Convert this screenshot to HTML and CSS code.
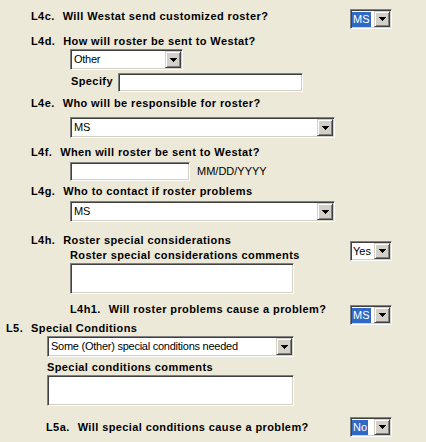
FILE: index.html
```html
<!DOCTYPE html>
<html lang="en">
<head>
    <meta charset="UTF-8">
    <title>Roster</title>
    <link rel="stylesheet" href="styles.css">
</head>
<body>
<div class="form">

    <div class="row l4c">
        <div class="lbl"><span class="num">L4c.</span>Will Westat send customized roster?</div>
        <div class="combo small"><div class="val"><span class="sel">MS</span></div><div class="btn"><svg width="7" height="4" viewBox="0 0 7 4"><path d="M0 0h7v1h-1v1h-1v1h-1v1h-1v-1h-1v-1h-1v-1h-1z"/></svg></div></div>
    </div>

    <div class="lbl l4d"><span class="num">L4d.</span>How will roster be sent to Westat?</div>
    <div class="combo other"><div class="val">Other</div><div class="btn"><svg width="7" height="4" viewBox="0 0 7 4"><path d="M0 0h7v1h-1v1h-1v1h-1v1h-1v-1h-1v-1h-1v-1h-1z"/></svg></div></div>
    <div class="line specify">
        <span class="lbl">Specify</span>
        <input type="text" class="text">
    </div>

    <div class="lbl l4e"><span class="num">L4e.</span>Who will be responsible for roster?</div>
    <div class="combo wide ms1"><div class="val">MS</div><div class="btn"><svg width="7" height="4" viewBox="0 0 7 4"><path d="M0 0h7v1h-1v1h-1v1h-1v1h-1v-1h-1v-1h-1v-1h-1z"/></svg></div></div>

    <div class="lbl l4f"><span class="num">L4f.</span>When will roster be sent to Westat?</div>
    <div class="line date">
        <input type="text" class="text">
        <span class="hint">MM/DD/YYYY</span>
    </div>

    <div class="lbl l4g"><span class="num">L4g.</span>Who to contact if roster problems</div>
    <div class="combo wide ms2"><div class="val">MS</div><div class="btn"><svg width="7" height="4" viewBox="0 0 7 4"><path d="M0 0h7v1h-1v1h-1v1h-1v1h-1v-1h-1v-1h-1v-1h-1z"/></svg></div></div>

    <div class="row l4h">
        <div>
            <div class="lbl"><span class="num">L4h.</span>Roster special considerations</div>
            <div class="sub">
                <div class="lbl comm">Roster special considerations comments</div>
                <textarea class="text area1"></textarea>
            </div>
        </div>
        <div class="combo small yes"><div class="val">Yes</div><div class="btn"><svg width="7" height="4" viewBox="0 0 7 4"><path d="M0 0h7v1h-1v1h-1v1h-1v1h-1v-1h-1v-1h-1v-1h-1z"/></svg></div></div>
    </div>

    <div class="row l4h1">
        <div class="lbl"><span class="num">L4h1.</span>Will roster problems cause a problem?</div>
        <div class="combo small drop2"><div class="val"><span class="sel">MS</span></div><div class="btn"><svg width="7" height="4" viewBox="0 0 7 4"><path d="M0 0h7v1h-1v1h-1v1h-1v1h-1v-1h-1v-1h-1v-1h-1z"/></svg></div></div>
    </div>

    <div class="lbl l5"><span class="num">L5.</span>Special Conditions</div>
    <div class="combo some"><div class="val">Some (Other) special conditions needed</div><div class="btn"><svg width="7" height="4" viewBox="0 0 7 4"><path d="M0 0h7v1h-1v1h-1v1h-1v1h-1v-1h-1v-1h-1v-1h-1z"/></svg></div></div>
    <div class="lbl comm5">Special conditions comments</div>
    <textarea class="text area2"></textarea>

    <div class="row l5a">
        <div class="lbl"><span class="num">L5a.</span>Will special conditions cause a problem?</div>
        <div class="combo small"><div class="val"><span class="sel">No</span></div><div class="btn"><svg width="7" height="4" viewBox="0 0 7 4"><path d="M0 0h7v1h-1v1h-1v1h-1v1h-1v-1h-1v-1h-1v-1h-1z"/></svg></div></div>
    </div>

</div>
</body>
</html>
```

FILE: styles.css
```css
body{
    margin:0;
    background:#ECE9D8;
    font:bold 11px/13px "Liberation Sans", Arial, sans-serif;
    letter-spacing:.4px;
    color:#000;
}
.form{
    width:392px;
    padding-top:9px;
}
.row{
    display:flex;
    justify-content:space-between;
    align-items:flex-start;
}
.line{
    display:flex;
    align-items:center;
}
.lbl{
    white-space:nowrap;
}
.num{
    margin-right:8px;
}

/* combo boxes */
.combo{
    display:flex;
    box-sizing:border-box;
    height:21px;
    padding:1px;
    background:#fff;
    border:1px solid;
    border-color:#808080 #fff #fff #808080;
    box-shadow:inset 1px 1px #404040, inset -1px -1px #D4D0C8;
    font-weight:normal;
    letter-spacing:-.25px;
}
.combo .val{
    flex:1;
    display:flex;
    align-items:center;
    padding-left:2px;
    white-space:nowrap;
    overflow:hidden;
}
.combo .btn{
    width:16px;
    box-sizing:border-box;
    background:#D4D0C8;
    border:1px solid;
    border-color:#D4D0C8 #404040 #404040 #D4D0C8;
    box-shadow:inset 1px 1px #fff, inset -1px -1px #808080;
    display:flex;
    align-items:center;
    justify-content:center;
}
.combo svg{
    display:block;
    shape-rendering:crispEdges;
}
.small{
    width:42px;
    height:20px;
    letter-spacing:0;
}
.small .val{
    padding-left:1px;
}
.sel{
    background:#316AC5;
    color:#fff;
    margin-left:-1px;
    padding:0 1px;
    line-height:15px;
}

/* text boxes */
.text{
    display:block;
    box-sizing:border-box;
    height:19px;
    margin:0;
    padding:1px;
    background:#fff;
    border:1px solid;
    border-color:#808080 #fff #fff #808080;
    box-shadow:inset 1px 1px #404040, inset -1px -1px #D4D0C8;
    outline:none;
    resize:none;
    font:11px "Liberation Sans", Arial, sans-serif;
}

/* L4 */
.l4c{ margin-left:31px; }
.l4c .lbl{ margin-top:1px; }
.l4d{ margin:6px 0 0 31px; }
.other{ margin:1px 0 0 70px; width:113px; }
.specify{ margin:3px 0 0 70px; align-items:flex-start; }
.specify .lbl{ width:47px; padding-left:1px; margin-top:2px; }
.specify .text{ width:185px; }
.l4e{ margin:5px 0 0 31px; }
.wide{ margin-left:70px; width:265px; }
.ms1{ margin-top:7px; }
.l4f{ margin:8px 0 0 31px; }
.date{ margin:3px 0 0 70px; }
.date .text{ width:120px; }
.hint{
    margin-left:7px;
    font-weight:normal;
    letter-spacing:0;
}
.l4g{ margin:4px 0 0 31px; }
.ms2{ margin-top:3px; }
.l4h{ margin:12px 0 0 31px; }
.l4h .sub{ margin-left:39px; }
.comm{ margin-top:2px; }
.area1{ margin-top:1px; width:224px; height:31px; }
.yes{ margin-top:7px; }
.l4h1{ margin:9px 0 0 70px; }
.drop2{ margin-top:2px; }

/* L5 */
.l5{ margin:-3px 0 0 6px; }
.some{ margin:1px 0 0 47px; width:247px; }
.comm5{ margin:4px 0 0 47px; }
.area2{ margin:1px 0 0 47px; width:247px; height:31px; }
.l5a{ margin:11px 0 0 46px; }
.l5a .lbl{ margin-top:4px; }
```
